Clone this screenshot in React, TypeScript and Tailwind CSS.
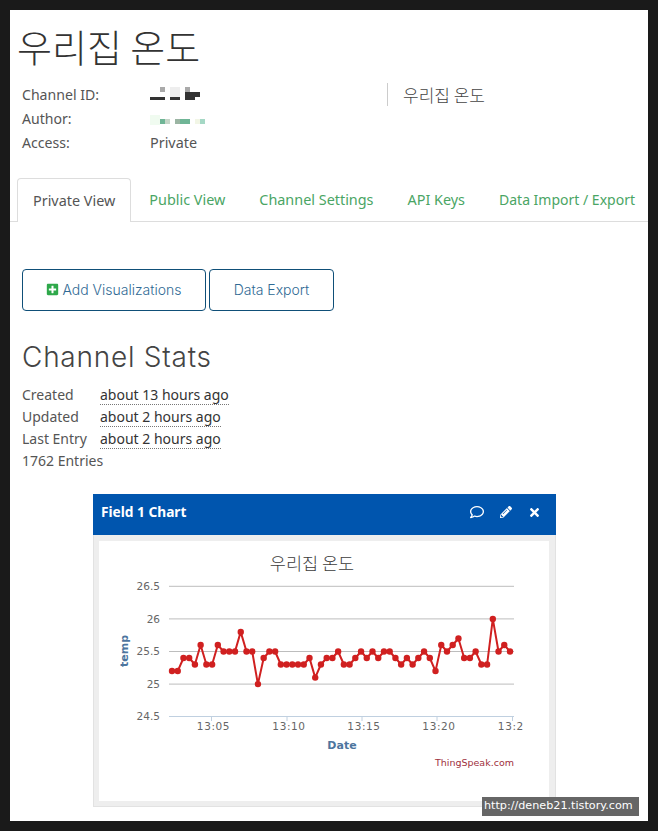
import { FaPlusSquare, FaRegComment, FaPencilAlt, FaTimes } from "react-icons/fa";

const vals = [25.2,25.2,25.4,25.4,25.3,25.6,25.3,25.3,25.6,25.5,25.5,25.5,25.8,25.5,25.5,25.0,25.4,25.5,25.5,25.3,25.3,25.3,25.3,25.3,25.4,25.1,25.3,25.4,25.4,25.5,25.3,25.3,25.4,25.5,25.4,25.5,25.4,25.5,25.5,25.4,25.3,25.4,25.3,25.4,25.5,25.4,25.2,25.6,25.5,25.6,25.7,25.4,25.4,25.5,25.3,25.3,26,25.5,25.6,25.5];
// chart svg origin = (99, 541)
const px = (i: number) => 172 - 99 + i * (338 / (vals.length - 1));
const py = (v: number) => 651.5 - 541 - (v - 25.5) * 65.2;
const pts = vals.map((v, i) => `${px(i).toFixed(1)},${py(v).toFixed(1)}`).join(" ");
const labelFont = '"DejaVu Sans", sans-serif';

function Chart() {
  return (
    <svg width="424" height="260" viewBox="0 0 424 260" className="block">
      <text x="213" y="29" textAnchor="middle" fontSize="17.5" fill="#3c3c3c" fontFamily='"Noto Sans CJK KR", sans-serif' fontWeight="300">우리집 온도</text>
      {[26.5, 26, 25.5, 25].map((v) => (
        <line key={v} x1="70" x2="415" y1={py(v)} y2={py(v)} stroke="#bdbdbd" strokeWidth="1" />
      ))}
      <line x1="70" x2="415" y1="175.5" y2="175.5" stroke="#c0d0e0" strokeWidth="1" />
      {[{ x: 112.5, t: "13:05" }, { x: 188, t: "13:10" }, { x: 263, t: "13:15" }, { x: 338, t: "13:20" }, { x: 413.5, t: "13:25" }].map((m) => (
        <g key={m.t}>
          <line x1={m.x} x2={m.x} y1="175" y2="180" stroke="#c0d0e0" />
          <text x={m.x + 2} y="189" textAnchor="middle" fontSize="10.5" letterSpacing="0.6" fill="#666" fontFamily={labelFont}>{m.t}</text>
        </g>
      ))}
      {[{ v: "26.5", y: 586 }, { v: "26", y: 619 }, { v: "25.5", y: 651 }, { v: "25", y: 684 }, { v: "24.5", y: 716 }].map((l) => (
        <text key={l.v} x="61" y={l.y - 541 + 4} textAnchor="end" fontSize="10.5" fill="#666" fontFamily={labelFont}>{l.v}</text>
      ))}
      <text transform="translate(28.5,110) rotate(-90)" textAnchor="middle" fontSize="11" fontWeight="700" fill="#4d759e" fontFamily={labelFont}>temp</text>
      <text x="243" y="208" textAnchor="middle" fontSize="11" fontWeight="700" fill="#4d759e" fontFamily={labelFont}>Date</text>
      <polyline points={pts} fill="none" stroke="#d02020" strokeWidth="2" strokeLinejoin="round" />
      {vals.map((v, i) => (
        <circle key={i} cx={px(i)} cy={py(v)} r="3.2" fill="#d02020" />
      ))}
      <text x="415" y="225" textAnchor="end" fontSize="9.5" fill="#a03040" fontFamily={labelFont}>ThingSpeak.com</text>
    </svg>
  );
}

function Row({ label, children }: { label: string; children: React.ReactNode }) {
  return (
    <div className="flex h-[24px] items-center">
      <div className="w-[128px] text-[14.1px]">{label}</div>
      {children}
    </div>
  );
}

function Stat({ label, value }: { label: string; value: string }) {
  return (
    <div className="flex h-[22px] items-center text-[14px]">
      <div className="w-[78px] pb-[2px] text-[#555]">{label}</div>
      <span className="border-b border-dotted border-[#777] leading-[19px] text-[#333]">{value}</span>
    </div>
  );
}

export default function App() {
  return (
    <div className="relative h-[831px] w-[658px] overflow-hidden bg-[#1a1a1a] p-[10px] text-[14.4px] text-[#555]" style={{ fontFamily: '"Noto Sans", "Noto Sans CJK KR", sans-serif' }}>
      <div className="h-[811px] bg-white">
        <h1 className="pl-[7px] pt-[10px] text-[38px] font-light leading-[52px] text-[#333]" style={{ fontFamily: '"Noto Sans CJK KR", sans-serif' }}>우리집 온도</h1>
        <div className="flex pl-[12px] pt-[11px]">
          <div className="w-[365px]">
            <Row label="Channel ID:">
              <svg width="56" height="16" viewBox="150 90 56 16" className="block">
                <rect x="160" y="90" width="5" height="5" fill="#aaa" />
                <rect x="150" y="100" width="15" height="3" fill="#333" />
                <rect x="170" y="90" width="10" height="10" fill="#eee" />
                <rect x="170" y="100" width="10" height="3" fill="#333" />
                <rect x="185" y="90" width="5" height="5" fill="#aaa" />
                <rect x="185" y="95" width="15" height="5" fill="#333" />
                <rect x="185" y="100" width="10" height="3" fill="#333" />
              </svg>
            </Row>
            <Row label="Author:">
              <svg width="56" height="16" viewBox="150 112 56 16" className="block">
                <rect x="150" y="116" width="10" height="10" fill="#f0fbf0" />
                <rect x="160" y="120" width="5" height="5" fill="#6fb596" />
                <rect x="165" y="120" width="5" height="5" fill="#c6d6c8" />
                <rect x="175" y="120" width="5" height="5" fill="#9bb5a3" />
                <rect x="180" y="120" width="10" height="5" fill="#6fb596" />
                <rect x="195" y="120" width="5" height="5" fill="#f2f6e6" />
                <rect x="200" y="120" width="5" height="5" fill="#a5d8c5" />
              </svg>
            </Row>
            <Row label="Access:">
              <span>Private</span>
            </Row>
          </div>
          <div className="flex h-[23px] items-center border-l border-[#ccc] pl-[15px] text-[17px] font-light text-[#444]" style={{ fontFamily: '"Noto Sans CJK KR", sans-serif' }}>우리집 온도</div>
        </div>

        <div className="mt-[23px] flex h-[44px] border-b border-[#ddd] pl-[7px]">
          <div className="flex h-[44px] items-center rounded-t border border-b-0 border-[#ddd] bg-white px-[15px] text-[#555]">Private View</div>
          <div className="flex h-[43px] items-center gap-[34px] pl-[18px] text-[#4aa564]">
            <span>Public View</span>
            <span>Channel Settings</span>
            <span>API Keys</span>
            <span className="text-[14px]">Data Import / Export</span>
          </div>
        </div>

        <div className="flex gap-[3px] pl-[12px] pt-[47px] text-[14px] font-light text-[#2f6a94]" style={{ fontFamily: 'Inter, sans-serif' }}>
          <div className="flex h-[42px] w-[184px] items-center justify-center gap-[3px] rounded border border-[#0f4f78] pb-[1px]">
            <FaPlusSquare className="text-[13px] text-[#2ea84a]" />
            <span>Add Visualizations</span>
          </div>
          <div className="flex h-[42px] w-[125px] items-center justify-center rounded border border-[#0f4f78] pb-[1px]">Data Export</div>
        </div>

        <h2 className="pl-[12px] pt-[25px] text-[28px] font-light leading-[42px] tracking-[0.75px] text-[#444]" style={{ fontFamily: 'Inter, sans-serif' }}>Channel Stats</h2>
        <div className="pl-[12px] pt-[6px]">
          <Stat label="Created" value="about 13 hours ago" />
          <Stat label="Updated" value="about 2 hours ago" />
          <Stat label="Last Entry" value="about 2 hours ago" />
          <div className="flex h-[22px] items-center pb-[2px] text-[14px]">1762 Entries</div>
        </div>

        <div className="ml-[83px] mt-[22px] w-[463px]">
          <div className="flex h-[41px] items-center justify-between bg-[#0055ae] pb-[5px] pl-[8px] pr-[15px] text-[13.7px] font-bold text-white" style={{ fontFamily: '"Noto Sans", sans-serif' }}>
            <span>Field 1 Chart</span>
            <div className="flex items-center gap-[16px] text-[14px]">
              <FaRegComment />
              <FaPencilAlt className="text-[12px]" />
              <FaTimes className="text-[13px]" />
            </div>
          </div>
          <div className="border-x border-b border-[#e2e2e2] bg-[#eeeeee] pb-[5px] pl-[5px] pr-[6px] pt-[6px]">
            <div className="h-[260px] bg-white"><Chart /></div>
          </div>
        </div>
      </div>
      <div className="absolute bottom-[15px] left-[482px] flex h-[19px] w-[157px] items-center bg-[#666] pl-[2px] text-[11.2px] text-white" style={{ fontFamily: '"DejaVu Sans", sans-serif' }}>http://deneb21.tistory.com</div>
    </div>
  );
}
